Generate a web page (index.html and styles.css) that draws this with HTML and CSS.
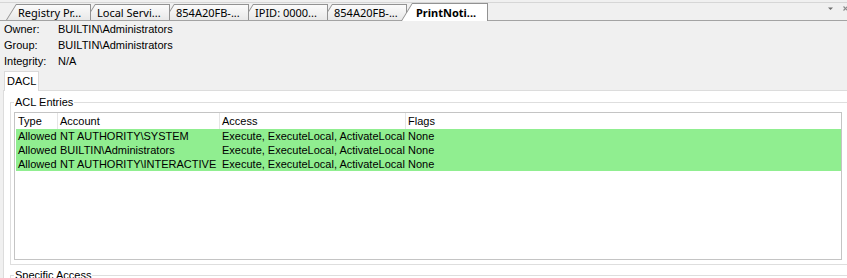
FILE: index.html
```html
<!DOCTYPE html>
<html lang="en">

<head>
    <meta charset="UTF-8">
    <title>PrintNotify - Security</title>
    <link rel="stylesheet" href="styles.css">
</head>

<body>
    <div class="tabstrip">
        <div class="tab"><div class="tab-face">Registry Pr...</div></div>
        <div class="tab"><div class="tab-face">Local Servi...</div></div>
        <div class="tab"><div class="tab-face">854A20FB-...</div></div>
        <div class="tab"><div class="tab-face">IPID: 0000...</div></div>
        <div class="tab"><div class="tab-face">854A20FB-...</div></div>
        <div class="tab active"><div class="tab-face">PrintNoti...</div></div>
        <div class="strip-buttons">
            <svg width="7" height="5" viewBox="0 0 7 5"><path d="M1 1.5h5L3.5 4z" fill="#6d6d6d"/></svg>
            <svg width="7" height="7" viewBox="0 0 7 7"><path d="M1.5 1.5l4 4M5.5 1.5l-4 4" stroke="#8a8a8a" stroke-width="1.2"/></svg>
        </div>
    </div>

    <div class="info">
        <div class="info-label">Owner:</div>
        <div>BUILTIN\Administrators</div>
        <div class="info-label">Group:</div>
        <div>BUILTIN\Administrators</div>
        <div class="info-label">Integrity:</div>
        <div>N/A</div>
    </div>

    <div class="page-tabs">
        <div class="page-tab">DACL</div>
    </div>
    <div class="panel">
        <fieldset class="group">
            <legend>ACL Entries</legend>
            <div class="listbox">
                <table class="acl">
                    <colgroup>
                        <col style="width: 42px">
                        <col style="width: 162px">
                        <col style="width: 186px">
                        <col>
                    </colgroup>
                    <thead>
                        <tr>
                            <th>Type</th>
                            <th>Account</th>
                            <th>Access</th>
                            <th>Flags</th>
                        </tr>
                    </thead>
                    <tbody>
                        <tr class="allowed">
                            <td>Allowed</td>
                            <td>NT AUTHORITY\SYSTEM</td>
                            <td>Execute, ExecuteLocal, ActivateLocal</td>
                            <td>None</td>
                        </tr>
                        <tr class="allowed">
                            <td>Allowed</td>
                            <td>BUILTIN\Administrators</td>
                            <td>Execute, ExecuteLocal, ActivateLocal</td>
                            <td>None</td>
                        </tr>
                        <tr class="allowed">
                            <td>Allowed</td>
                            <td>NT AUTHORITY\INTERACTIVE</td>
                            <td>Execute, ExecuteLocal, ActivateLocal</td>
                            <td>None</td>
                        </tr>
                    </tbody>
                </table>
            </div>
        </fieldset>
        <fieldset class="group next">
            <legend>Specific Access</legend>
        </fieldset>
    </div>
</body>

</html>
```

FILE: styles.css
```css
* {
    box-sizing: border-box;
}
body {
    margin: 0;
    background: #f0f0f0;
    font-family: "Liberation Sans", Arial, sans-serif;
    font-size: 11px;
    color: #000;
    overflow: hidden;
    height: 278px;
}

/* document tabs */
.tabstrip {
    display: flex;
    align-items: flex-end;
    height: 19px;
    margin-top: 2px;
    padding-left: 6px;
    border-top: 1px solid #d6d6d6;
    border-bottom: 1px solid #a3a3a3;
}
.tab {
    position: relative;
    width: 85px;
    height: 16px;
    margin-left: -6px;
    padding: 1px 1px 0 1px;
    background: #929292;
    clip-path: polygon(0 100%, 10px 0, 100% 0, 100% 100%);
    font-family: "Noto Sans", sans-serif;
    font-size: 11px;
}
.tab:first-child {
    margin-left: 0;
}
.tab:nth-child(1) { z-index: 6; }
.tab:nth-child(2) { z-index: 5; }
.tab:nth-child(3) { z-index: 4; }
.tab:nth-child(4) { z-index: 3; }
.tab:nth-child(5) { z-index: 2; }
.tab-face {
    height: 100%;
    padding: 1px 0 0 11px;
    line-height: 14px;
    white-space: nowrap;
    overflow: hidden;
    background: linear-gradient(#fbfbfb, #e8e8e8);
    clip-path: polygon(0 100%, 9.4px 0, 100% 0, 100% 100%);
}
.tab.active {
    z-index: 10;
    width: 87px;
    height: 18px;
    margin-bottom: -1px;
    clip-path: polygon(0 100%, 11px 0, 100% 0, 100% 100%);
    font-weight: bold;
}
.tab.active .tab-face {
    background: #fff;
    line-height: 16px;
    padding-left: 14px;
    clip-path: polygon(0 100%, 10.4px 0, 100% 0, 100% 100%);
}
.strip-buttons {
    display: flex;
    align-items: center;
    gap: 8px;
    margin-left: auto;
    margin-right: -2px;
    align-self: flex-start;
    padding-top: 2px;
}

/* owner info */
.info {
    display: grid;
    grid-template-columns: 54px 1fr;
    padding: 0 4px;
    line-height: 16px;
}

/* DACL page */
.page-tabs {
    display: flex;
    margin: 2px 0 0 4px;
}
.page-tab {
    position: relative;
    z-index: 1;
    width: 35px;
    height: 20px;
    margin-bottom: -1px;
    padding-left: 2px;
    line-height: 18px;
    background: #fff;
    border: 1px solid #dadada;
    border-bottom: none;
}
.panel {
    margin: 0 -2px 0 3px;
    padding: 5px 0 0 6px;
    background: #fff;
    border: 1px solid #dcdcdc;
    border-bottom: none;
    height: 188px;
    overflow: hidden;
}
.group {
    margin: 0;
    min-width: 0;
    padding: 3px 5px 4px 3px;
    border: 1px solid #dedede;
}
.group legend {
    padding: 0 1px;
    line-height: 13px;
}
.group.next {
    margin-top: 4px;
    height: 20px;
}

/* entry list */
.listbox {
    height: 148px;
    padding: 0 0 0 1px;
    border: 1px solid #c4c4c4;
    background: #fff;
}
.acl {
    width: 100%;
    table-layout: fixed;
    border-collapse: separate;
    border-spacing: 0;
}
.acl th {
    height: 16px;
    padding: 0 0 0 2px;
    font-weight: normal;
    text-align: left;
    border-right: 1px solid #e5e5e5;
    white-space: nowrap;
}
.acl th:last-child {
    border-right: none;
}
.acl td {
    height: 14px;
    padding: 0 0 0 2px;
    line-height: 14px;
    white-space: nowrap;
    overflow: hidden;
}
.acl tr.allowed {
    background: #90ee90;
}
```
